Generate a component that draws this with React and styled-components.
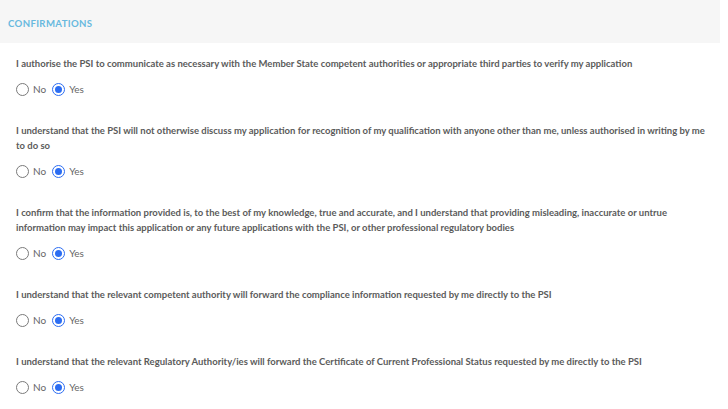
import React from "react";
import styled, { createGlobalStyle } from "styled-components";

const Global = createGlobalStyle`
  html, body { margin: 0; padding: 0; background: #ffffff; }
  body { font-family: Lato, "Open Sans", "Liberation Sans", sans-serif; }
`;

const Page = styled.div`
  width: 728px;
`;

const Header = styled.div`
  width: 720px;
  height: 43px;
  background: #f6f6f6;
  display: flex;
  align-items: center;
  padding: 3px 0 0 8px;
  box-sizing: border-box;
`;

const Title = styled.h2`
  margin: 0;
  font-size: 9.6px;
  font-weight: 700;
  letter-spacing: 0.35px;
  color: #68b9de;
  text-transform: uppercase;
`;

const Body = styled.div`
  width: 720px;
  box-sizing: border-box;
  padding: 13px 10px 0 16px;
  display: flex;
  flex-direction: column;
  gap: 27px;
`;

const Question = styled.div`
  display: flex;
  flex-direction: column;
  gap: 11px;
`;

const Prompt = styled.p`
  margin: 0;
  font-size: 9.5px;
  line-height: 15px;
  font-weight: 700;
  color: #5b5b5b;
`;

const Options = styled.div`
  display: flex;
  align-items: center;
  gap: 6px;
  height: 14px;
`;

const Option = styled.label`
  display: flex;
  align-items: center;
  gap: 4px;
  font-size: 10px;
  color: #666666;
  font-weight: 400;
`;

const Circle = styled.span`
  width: 13px;
  height: 13px;
  border-radius: 50%;
  box-sizing: border-box;
  border: 1px solid ${(p) => (p.$checked ? "#2c6df2" : "#7a7a7a")};
  display: flex;
  align-items: center;
  justify-content: center;
  background: #fff;
  &::after {
    content: "";
    display: ${(p) => (p.$checked ? "block" : "none")};
    width: 7px;
    height: 7px;
    border-radius: 50%;
    background: #2c6df2;
  }
`;

const questions = [
  "I authorise the PSI to communicate as necessary with the Member State competent authorities or appropriate third parties to verify my application",
  "I understand that the PSI will not otherwise discuss my application for recognition of my qualification with anyone other than me, unless authorised in writing by me to do so",
  "I confirm that the information provided is, to the best of my knowledge, true and accurate, and I understand that providing misleading, inaccurate or untrue information may impact this application or any future applications with the PSI, or other professional regulatory bodies",
  "I understand that the relevant competent authority will forward the compliance information requested by me directly to the PSI",
  "I understand that the relevant Regulatory Authority/ies will forward the Certificate of Current Professional Status requested by me directly to the PSI",
];

export default function App() {
  return (
    <Page>
      <Global />
      <Header>
        <Title>Confirmations</Title>
      </Header>
      <Body>
        {questions.map((q, i) => (
          <Question key={i}>
            <Prompt>{q}</Prompt>
            <Options>
              <Option>
                <Circle />
                No
              </Option>
              <Option>
                <Circle $checked />
                Yes
              </Option>
            </Options>
          </Question>
        ))}
      </Body>
    </Page>
  );
}
